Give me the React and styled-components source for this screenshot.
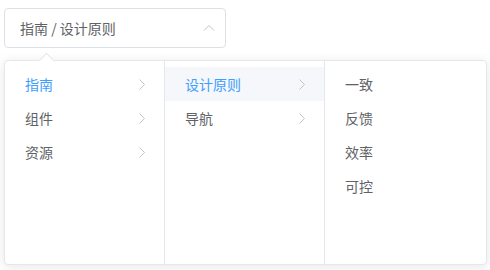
import React from "react";
import styled, { createGlobalStyle } from "styled-components";

const Global = createGlobalStyle`
  html, body { margin: 0; padding: 0; background: #fff; }
  body { font-family: "Noto Sans CJK SC", "Noto Sans", sans-serif; }
`;

const Page = styled.div`
  position: relative;
  width: 490px;
  height: 270px;
  padding: 8px 4px;
  box-sizing: border-box;
  overflow: hidden;
`;

const InputBox = styled.div`
  width: 222px;
  height: 40px;
  box-sizing: border-box;
  border: 1px solid #dcdfe6;
  border-radius: 4px;
  display: flex;
  align-items: center;
  justify-content: space-between;
  padding: 0 10px 0 15px;
  font-size: 14px;
  color: #606266;
`;

const Dropdown = styled.div`
  position: absolute;
  left: 4px;
  top: 60px;
  display: flex;
  background: #fff;
  border: 1px solid #e4e7ed;
  border-radius: 4px;
  box-shadow: 0 2px 12px 0 rgba(0, 0, 0, 0.1);
  height: 205px;
  box-sizing: border-box;
`;

const Arrow = styled.div`
  position: absolute;
  top: -6px;
  left: 36px;
  width: 10px;
  height: 10px;
  background: #fff;
  border-left: 1px solid #e4e7ed;
  border-top: 1px solid #e4e7ed;
  transform: rotate(45deg);
`;

const Menu = styled.ul`
  list-style: none;
  margin: 0;
  padding: 6px 0;
  width: ${(p) => p.$w}px;
  box-sizing: border-box;
  border-right: ${(p) => (p.$last ? "none" : "1px solid #e4e7ed")};
  position: relative;
  z-index: 1;
`;

const Node = styled.li`
  height: 34px;
  display: flex;
  align-items: center;
  justify-content: space-between;
  padding: 0 18px 0 20px;
  font-size: 14px;
  color: ${(p) => (p.$active ? "#409eff" : "#606266")};
  background: ${(p) => (p.$hover ? "#f5f7fa" : "transparent")};
`;

const Chevron = () => (
  <svg width="8" height="13" viewBox="0 0 8 13">
    <path d="M1.5 1.5 L6.5 6.5 L1.5 11.5" fill="none" stroke="#c0c4cc" strokeWidth="1" />
  </svg>
);

const ArrowUp = () => (
  <svg width="12" height="8" viewBox="0 0 12 8">
    <path d="M1 6.5 L6 1.5 L11 6.5" fill="none" stroke="#c0c4cc" strokeWidth="1" />
  </svg>
);

const cols = [
  { w: 160, items: [{ t: "指南", a: true, c: true }, { t: "组件", c: true }, { t: "资源", c: true }] },
  { w: 160, items: [{ t: "设计原则", a: true, h: true, c: true }, { t: "导航", c: true }] },
  { w: 161, items: [{ t: "一致" }, { t: "反馈" }, { t: "效率" }, { t: "可控" }], last: true },
];

export default function App() {
  return (
    <Page>
      <Global />
      <InputBox>
        <span>指南 / 设计原则</span>
        <ArrowUp />
      </InputBox>
      <Dropdown>
        <Arrow />
        {cols.map((col, i) => (
          <Menu key={i} $w={col.w} $last={col.last}>
            {col.items.map((it) => (
              <Node key={it.t} $active={it.a} $hover={it.h}>
                <span>{it.t}</span>
                {it.c && <Chevron />}
              </Node>
            ))}
          </Menu>
        ))}
      </Dropdown>
    </Page>
  );
}
